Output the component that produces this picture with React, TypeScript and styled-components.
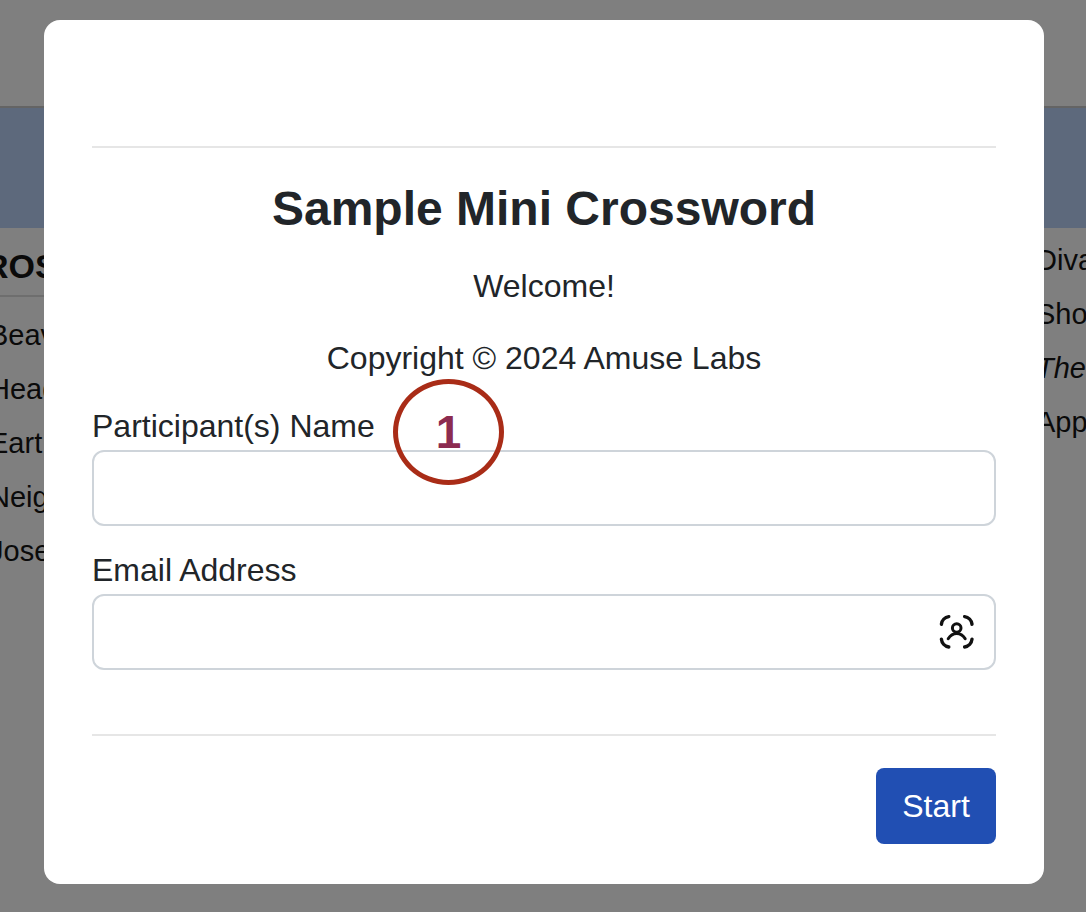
import React from 'react';
import styled, { createGlobalStyle } from 'styled-components';

const GlobalStyle = createGlobalStyle`
  *, *::before, *::after { box-sizing: border-box; }
  body {
    margin: 0;
    background: #fff;
    color: #212529;
    font-family: "Liberation Sans", Arial, sans-serif;
    font-size: 32px;
    line-height: 48px;
  }
`;

const Page = styled.div`
  position: relative;
  min-height: 100vh;
  overflow: hidden;
`;

const PuzzleHeader = styled.header`
  height: 106px;
`;

const CurrentClue = styled.div`
  height: 122px;
  background: #bad2f8;
  border-top: 2px solid #c8c8c8;
`;

const Clues = styled.main`
  display: flex;
  justify-content: space-between;
  color: #141414;
`;

const ClueColumn = styled.section<{ $side: 'left' | 'right' }>`
  width: ${({ $side }) => ($side === 'left' ? 80 : 50)}px;
  margin-left: ${({ $side }) => ($side === 'left' ? -16 : 0)}px;
  padding-top: ${({ $side }) => ($side === 'left' ? 8 : 5)}px;
  white-space: nowrap;
`;

const ClueHeading = styled.h2`
  margin: 0 0 11px;
  padding: 6px 0 7px;
  border-bottom: 2px solid #dcdcdc;
  font-size: 34px;
  line-height: 48px;
  height: 61px;
`;

const ClueList = styled.ul<{ $inset: number }>`
  margin: 0;
  padding: 0 0 0 ${({ $inset }) => $inset}px;
  list-style: none;
  font-size: 29px;
  line-height: 54px;
`;

const Backdrop = styled.div`
  position: absolute;
  inset: 0;
  padding: 20px 42px 28px 44px;
  background: rgba(0, 0, 0, 0.5);
`;

const Dialog = styled.form`
  display: flex;
  flex-direction: column;
  padding: 0 48px 40px;
  background: #fff;
  border-radius: 16px;
`;

const DialogHeader = styled.header`
  height: 128px;
  border-bottom: 2px solid #e6e6e6;
`;

const DialogBody = styled.div`
  display: flex;
  flex-direction: column;
  gap: 20px;
  padding: 32px 0 64px;
`;

const Intro = styled.div`
  display: flex;
  flex-direction: column;
  gap: 24px;
  text-align: center;
`;

const Title = styled.h1`
  margin: 0;
  font-size: 48px;
  line-height: 58px;
`;

const Paragraph = styled.p`
  margin: 0;
`;

const Field = styled.div`
  position: relative;
  display: flex;
  flex-direction: column;
`;

const Label = styled.label`
  align-self: flex-start;
`;

const TextInput = styled.input`
  width: 100%;
  height: 76px;
  padding: 12px 24px;
  border: 2px solid #ced4da;
  border-radius: 12px;
  background: #fff;
  color: inherit;
  font: inherit;
  outline: none;
`;

const AutofillIcon = styled.svg`
  position: absolute;
  right: 21px;
  bottom: 20px;
  width: 36px;
  height: 36px;
`;

const StepMarker = styled.span`
  position: absolute;
  top: -23px;
  left: 301px;
  display: flex;
  align-items: center;
  justify-content: center;
  width: 111px;
  height: 106px;
  border: 5px solid #a92c17;
  border-radius: 50%;
  color: #8c2b50;
  font-size: 46px;
  font-weight: bold;
  pointer-events: none;
`;

const DialogFooter = styled.footer`
  display: flex;
  justify-content: flex-end;
  padding-top: 32px;
  border-top: 2px solid #e6e6e6;
`;

const StartButton = styled.button`
  width: 120px;
  height: 76px;
  padding: 0;
  border: 0;
  border-radius: 8px;
  background: #214fb3;
  color: #fff;
  font: inherit;
`;

const leftClues = ['Beav', 'Head', 'Eart', 'Neig', 'Jose'];

export default function App() {
  return (
    <>
      <GlobalStyle />
      <Page>
        <PuzzleHeader />
        <CurrentClue />
        <Clues>
          <ClueColumn $side="left">
            <ClueHeading>ROS</ClueHeading>
            <ClueList $inset={5}>
              {leftClues.map((clue) => (
                <li key={clue}>{clue}</li>
              ))}
            </ClueList>
          </ClueColumn>
          <ClueColumn $side="right">
            <ClueList $inset={0}>
              <li>Diva</li>
              <li>Sho</li>
              <li><em>The</em></li>
              <li>App</li>
            </ClueList>
          </ClueColumn>
        </Clues>
        <Backdrop>
          <Dialog role="dialog" aria-labelledby="puzzle-title" onSubmit={(e) => e.preventDefault()}>
            <DialogHeader />
            <DialogBody>
              <Intro>
                <Title id="puzzle-title">Sample Mini Crossword</Title>
                <Paragraph>Welcome!</Paragraph>
                <Paragraph>Copyright © 2024 Amuse Labs</Paragraph>
              </Intro>
              <Field>
                <Label htmlFor="name">Participant(s) Name</Label>
                <TextInput id="name" type="text" />
                <StepMarker>1</StepMarker>
              </Field>
              <Field>
                <Label htmlFor="email">Email Address</Label>
                <TextInput id="email" type="email" />
                <AutofillIcon viewBox="0 0 36 36" fill="none" stroke="#111" strokeWidth="3.4" strokeLinecap="round" aria-hidden="true">
                  <path d="M2.4 10.2A8.6 8.6 0 0 1 9.8 2.6M25.6 2.6A8.6 8.6 0 0 1 33 10.2M33 25.2A8.6 8.6 0 0 1 25.6 33M9.8 33A8.6 8.6 0 0 1 2.4 25.2" />
                  <circle cx="17.7" cy="14" r="4.3" strokeWidth="3" />
                  <path d="M9.2 24.8C11.2 21.4 14.2 19.4 17.7 19.4S24.2 21.4 26.2 24.8" strokeWidth="3" />
                </AutofillIcon>
              </Field>
            </DialogBody>
            <DialogFooter>
              <StartButton type="submit">Start</StartButton>
            </DialogFooter>
          </Dialog>
        </Backdrop>
      </Page>
    </>
  );
}
